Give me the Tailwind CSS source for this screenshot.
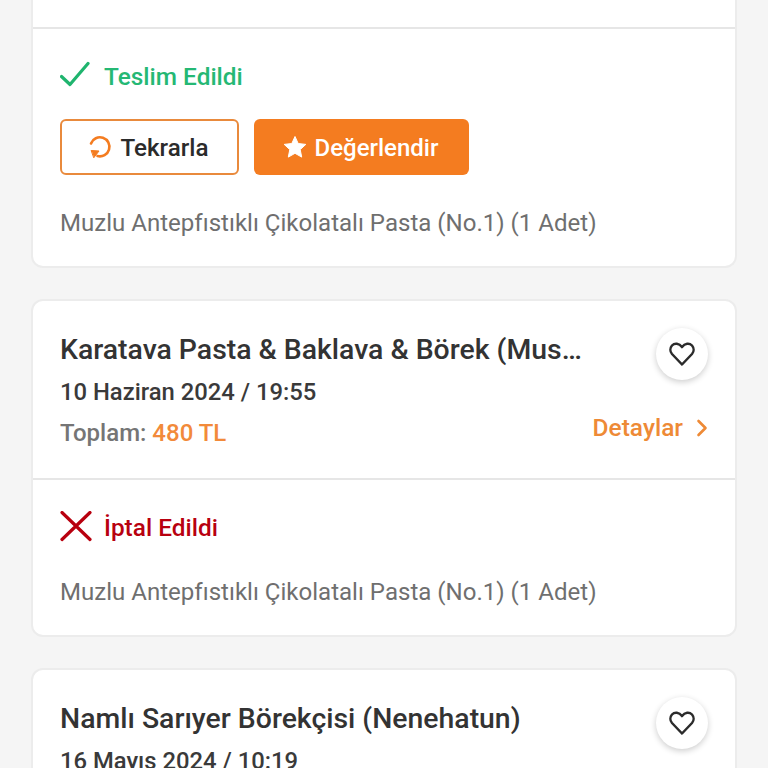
<!DOCTYPE html>
<html lang="tr">
<head>
  <meta charset="UTF-8" />
  <meta name="viewport" content="width=device-width, initial-scale=1.0"/>
  <title>Siparişlerim</title>
  <script src="https://cdn.jsdelivr.net/npm/@tailwindcss/browser@4"></script>
</head>
<body class="bg-[#f5f5f5] font-['Roboto',sans-serif]">
  <div class="h-[768px] w-[768px] overflow-hidden px-[31px]">

    <!-- Order 1 (cut off at the top) -->
    <div class="mt-[-20px] rounded-b-[12px] border-2 border-t-0 border-[#ececec] bg-white">
      <div class="h-[49px] border-b-2 border-[#e6e6e6]"></div>
      <div class="px-[27px] pt-[32px] pb-[25px]">
        <div class="flex h-[32px] items-center gap-[12px]">
          <svg class="h-[32px] w-[32px]" viewBox="0 0 32 32" fill="none" stroke="#1fb46e" stroke-width="3.2" stroke-linecap="round" stroke-linejoin="round"><path d="M1.500 15.500l8.500 8L28 2.500"/></svg>
          <span class="text-[24.4px] font-medium text-[#25b874]">Teslim Edildi</span>
        </div>
        <div class="mt-[26px] flex gap-[15px]">
          <button class="flex h-[56px] w-[179px] items-center justify-center gap-[8px] rounded-[6px] border-2 border-[#e98a3c] bg-white pr-[2px]">
            <svg class="h-[24px] w-[24px]" viewBox="0 0 24 24" fill="none" stroke="#f47c20" stroke-width="2.600" stroke-linecap="round"><path d="M3 8.500A9.500 9.500 0 1 1 9.500 21"/><path d="M3.500 15.500l7.500 .5-5 6.500z" fill="#f47c20" stroke-width="1" stroke-linejoin="round"/></svg>
            <span class="mt-[2px] text-[24.2px] font-medium text-[#2b2b2b]">Tekrarla</span>
          </button>
          <button class="flex h-[56px] w-[215px] items-center justify-center gap-[8px] rounded-[6px] bg-[#f47c20] pr-[2px]">
            <svg class="h-[24px] w-[24px]" viewBox="0 0 24 24" fill="#fff" stroke="#fff" stroke-width="1" stroke-linejoin="round"><path d="M12 1.500l3.200 7 7.600 .9-5.600 5.200 1.500 7.500L12 18.300l-6.700 3.800 1.500-7.500L1.200 9.400l7.600-.9z"/></svg>
            <span class="mt-[2px] text-[24px] font-medium text-white">Değerlendir</span>
          </button>
        </div>
        <p class="mt-[30px] text-[24.05px] leading-[36px] text-[#6f6f6f]">Muzlu Antepfıstıklı Çikolatalı Pasta (No.1) (1 Adet)</p>
      </div>
    </div>

    <!-- Order 2 -->
    <div class="mt-[31px] rounded-[12px] border-2 border-[#ececec] bg-white">
      <div class="relative h-[179px] border-b-2 border-[#e6e6e6] px-[27px] pt-[29px]">
        <h2 class="w-[527px] truncate text-[28.4px] leading-[40px] font-medium text-[#333333]">Karatava Pasta &amp; Baklava &amp; Börek (Muslihittin)</h2>
        <p class="mt-[2px] text-[23.8px] leading-[40px] font-medium text-[#3a3a3a]">10 Haziran 2024 / 19:55</p>
        <p class="mt-[1px] text-[24px] leading-[40px] font-medium text-[#757575]">Toplam: <span class="text-[#f28a3a]">480 TL</span></p>
        <button class="absolute top-[27px] right-[27px] flex h-[52px] w-[52px] items-center justify-center rounded-full bg-white shadow-[0_2px_6px_rgba(0,0,0,0.2)]">
          <svg class="h-[28px] w-[28px]" viewBox="0 0 28 28" fill="none" stroke="#2b2b2b" stroke-width="2.500" stroke-linejoin="round"><path d="M14 24.500L4 14a6.500 6.500 0 0 1 0-8.500c2.600-2.700 7-2.500 10 1.600 3-4.100 7.400-4.300 10-1.600a6.500 6.500 0 0 1 0 8.500z"/></svg>
        </button>
        <div class="absolute top-[109px] right-[27px] flex items-center gap-[13px]">
          <span class="text-[24.500px] font-medium text-[#ee8a36]">Detaylar</span>
          <svg class="h-[20px] w-[12px]" viewBox="0 0 12 20" fill="none" stroke="#ee8a36" stroke-width="2.600" stroke-linecap="round" stroke-linejoin="round"><path d="M2.500 3l7 7-7 7"/></svg>
        </div>
      </div>
      <div class="px-[27px] pt-[31px] pb-[25px]">
        <div class="flex h-[32px] items-center gap-[12px]">
          <svg class="h-[32px] w-[32px]" viewBox="0 0 32 32" fill="none" stroke="#b8000f" stroke-width="3.200" stroke-linecap="round"><path d="M2 1.500l28 27M30 1.500L2 28.500"/></svg>
          <span class="mt-[2px] text-[24.4px] font-medium text-[#b8000f]">İptal Edildi</span>
        </div>
        <p class="mt-[31px] text-[24.05px] leading-[36px] text-[#6f6f6f]">Muzlu Antepfıstıklı Çikolatalı Pasta (No.1) (1 Adet)</p>
      </div>
    </div>

    <!-- Order 3 -->
    <div class="mt-[31px] rounded-[12px] border-2 border-[#ececec] bg-white">
      <div class="relative h-[179px] px-[27px] pt-[29px]">
        <h2 class="w-[527px] truncate text-[28.4px] leading-[40px] font-medium text-[#333333]">Namlı Sarıyer Börekçisi (Nenehatun)</h2>
        <p class="mt-[2px] text-[23.8px] leading-[40px] font-medium text-[#3a3a3a]">16 Mayıs 2024 / 10:19</p>
        <button class="absolute top-[27px] right-[27px] flex h-[52px] w-[52px] items-center justify-center rounded-full bg-white shadow-[0_2px_6px_rgba(0,0,0,0.2)]">
          <svg class="h-[28px] w-[28px]" viewBox="0 0 28 28" fill="none" stroke="#2b2b2b" stroke-width="2.500" stroke-linejoin="round"><path d="M14 24.500L4 14a6.500 6.500 0 0 1 0-8.500c2.600-2.700 7-2.500 10 1.600 3-4.100 7.400-4.300 10-1.600a6.500 6.500 0 0 1 0 8.500z"/></svg>
        </button>
      </div>
    </div>

  </div>
</body>
</html>
